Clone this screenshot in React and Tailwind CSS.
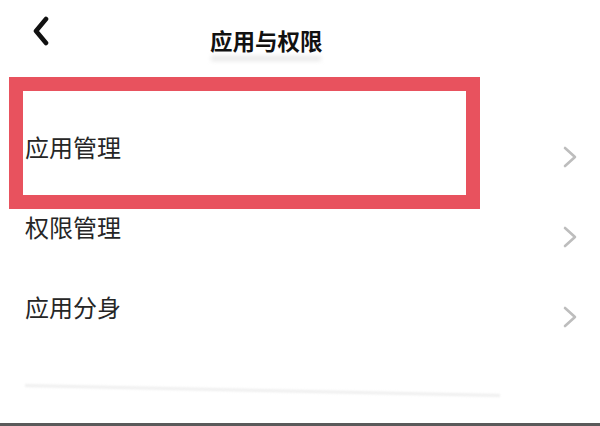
import React from "react";

function Chevron() {
  return (
    <svg width="16" height="24" viewBox="0 0 16 24" fill="none" className="translate-y-[10px]">
      <polyline points="3,3 13,12 3,21" stroke="#bdbdbd" strokeWidth="2.6" strokeLinecap="round" strokeLinejoin="round" />
    </svg>
  );
}

function Row({ label }) {
  return (
    <div className="h-[80px] flex items-center justify-between pl-[25px] pr-[22px]">
      <span className="text-[24px] leading-none text-[#262626] tracking-[0px]">{label}</span>
      <Chevron />
    </div>
  );
}

export default function App() {
  return (
    <div
      className="relative w-[600px] h-[426px] bg-white overflow-hidden flex flex-col"
      style={{ fontFamily: '"Noto Sans CJK SC", "Noto Sans", sans-serif' }}
    >
      <div className="h-[107px] flex items-start">
        <div className="pl-[32px] pt-[16px]">
          <svg width="18" height="30" viewBox="0 0 18 30" fill="none">
            <polyline points="14,3 4,15 14,27" stroke="#111" strokeWidth="4.6" strokeLinecap="round" strokeLinejoin="round" />
          </svg>
        </div>
        <div className="ml-[160px] pt-[27px] flex flex-col items-center">
          <span className="text-[22.5px] leading-[26px] font-bold text-[#111]">应用与权限</span>
          <div className="mt-[3px] h-[5px] w-[110px] bg-[#e9e9e9] blur-[2px]" />
        </div>
      </div>
      <Row label="应用管理" />
      <Row label="权限管理" />
      <Row label="应用分身" />
      <div className="mt-[42px] ml-[25px] w-[475px] h-[3px] bg-[#efefef] rotate-[1.2deg] blur-[1px]" />
      <div className="absolute left-0 right-0 bottom-0 h-[3px] bg-[#5a5a5a]" />
      <div className="absolute left-[9px] top-[77px] w-[471px] h-[132px] border-[14px] border-[#e8525e]" />
    </div>
  );
}
